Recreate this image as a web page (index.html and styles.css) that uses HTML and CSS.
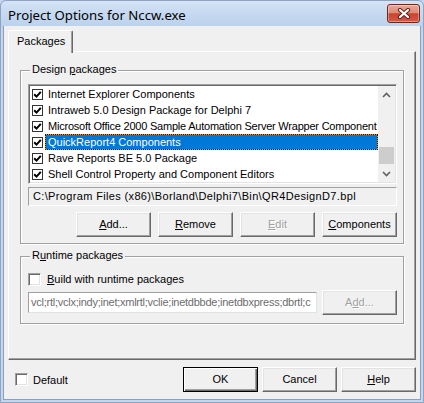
FILE: index.html
```html
<!DOCTYPE html>
<html>
<head>
<meta charset="utf-8">
<title>Project Options for Nccw.exe</title>
<link rel="stylesheet" href="styles.css">
</head>
<body>
<div class="window">
  <div class="titlebar">
    <span class="title">Project Options for Nccw.exe</span>
    <div class="close">
      <svg width="14" height="11" viewBox="0 0 14 11">
        <path d="M3 2 L11 9 M11 2 L3 9" stroke="#5b241a" stroke-width="4.2" stroke-linecap="round" fill="none"/>
        <path d="M3 2 L11 9 M11 2 L3 9" stroke="#ffffff" stroke-width="2.2" stroke-linecap="round" fill="none"/>
      </svg>
    </div>
  </div>
  <div class="client">
    <div class="tabs"><div class="tab">Packages</div></div>
    <div class="panel">
      <div class="group group-design">
        <div class="group-label">Design <u>p</u>ackages</div>
        <div class="listbox">
          <div class="list-items">
            <div class="item"><span class="cb"><svg width="9" height="9" viewBox="0 0 9 9"><path d="M1.2 4.2 L3.5 6.6 L7.8 1.8" stroke="#000" stroke-width="2" fill="none"/></svg></span><span class="item-text">Internet Explorer Components</span></div>
            <div class="item"><span class="cb"><svg width="9" height="9" viewBox="0 0 9 9"><path d="M1.2 4.2 L3.5 6.6 L7.8 1.8" stroke="#000" stroke-width="2" fill="none"/></svg></span><span class="item-text">Intraweb 5.0 Design Package for Delphi 7</span></div>
            <div class="item"><span class="cb"><svg width="9" height="9" viewBox="0 0 9 9"><path d="M1.2 4.2 L3.5 6.6 L7.8 1.8" stroke="#000" stroke-width="2" fill="none"/></svg></span><span class="item-text long">Microsoft Office 2000 Sample Automation Server Wrapper Component</span></div>
            <div class="item"><span class="cb"><svg width="9" height="9" viewBox="0 0 9 9"><path d="M1.2 4.2 L3.5 6.6 L7.8 1.8" stroke="#000" stroke-width="2" fill="none"/></svg></span><span class="item-text selected">QuickReport4 Components</span></div>
            <div class="item"><span class="cb"><svg width="9" height="9" viewBox="0 0 9 9"><path d="M1.2 4.2 L3.5 6.6 L7.8 1.8" stroke="#000" stroke-width="2" fill="none"/></svg></span><span class="item-text">Rave Reports BE 5.0 Package</span></div>
            <div class="item"><span class="cb"><svg width="9" height="9" viewBox="0 0 9 9"><path d="M1.2 4.2 L3.5 6.6 L7.8 1.8" stroke="#000" stroke-width="2" fill="none"/></svg></span><span class="item-text">Shell Control Property and Component Editors</span></div>
          </div>
          <div class="vscroll">
            <div class="sb-btn"><svg width="9" height="6" viewBox="0 0 9 6"><path d="M1 5 L4.5 1.5 L8 5" stroke="#606060" stroke-width="1.6" fill="none"/></svg></div>
            <div class="sb-track"><div class="sb-thumb"></div></div>
            <div class="sb-btn"><svg width="9" height="6" viewBox="0 0 9 6"><path d="M1 1 L4.5 4.5 L8 1" stroke="#606060" stroke-width="1.6" fill="none"/></svg></div>
          </div>
        </div>
        <div class="pathbox">C:\Program Files (x86)\Borland\Delphi7\Bin\QR4DesignD7.bpl</div>
        <div class="btn-row">
          <button class="btn"><u>A</u>dd...</button>
          <button class="btn"><u>R</u>emove</button>
          <button class="btn disabled"><u>E</u>dit</button>
          <button class="btn"><u>C</u>omponents</button>
        </div>
      </div>
      <div class="group group-runtime">
        <div class="group-label">R<u>u</u>ntime packages</div>
        <div class="check-row build"><span class="cb3d"></span><span><u>B</u>uild with runtime packages</span></div>
        <div class="edit-row">
          <div class="edit">vcl;rtl;vclx;indy;inet;xmlrtl;vclie;inetdbbde;inetdbxpress;dbrtl;c</div>
          <button class="btn disabled">A<u>d</u>d...</button>
        </div>
      </div>
    </div>
    <div class="footer">
      <div class="check-row default"><span class="cb3d"></span><span>Default</span></div>
      <div class="footer-btns">
        <button class="btn default-btn">OK</button>
        <button class="btn">Cancel</button>
        <button class="btn"><u>H</u>elp</button>
      </div>
    </div>
  </div>
</div>
</body>
</html>
```
FILE: styles.css
```css
* { box-sizing: border-box; }
html, body { margin: 0; padding: 0; }
body {
  width: 424px;
  height: 403px;
  overflow: hidden;
  font-family: "Liberation Sans", Arial, sans-serif;
  font-size: 11px;
  color: #000;
  background: #c3d6ee;
}
.window {
  width: 424px;
  height: 403px;
  display: flex;
  flex-direction: column;
  border: 1px solid #8ea4c0;
  border-radius: 6px 6px 0 0;
  background: linear-gradient(#d5e4f6 0, #c6d9f0 12px, #bcd2ed 25px, #c3d6ee 30px, #c3d6ee 100%);
}
.titlebar {
  height: 25px;
  flex: none;
  display: flex;
  align-items: flex-start;
  justify-content: space-between;
  padding: 0 3px 0 7px;
}
.title {
  font-family: "Noto Sans", "Liberation Sans", sans-serif;
  font-size: 13.2px;
  line-height: 16px;
  margin-top: 6px;
  color: #000;
}
.close {
  width: 33px;
  height: 19px;
  margin-top: 3px;
  border: 1px solid #6c2a1e;
  border-radius: 3px;
  background: linear-gradient(#eaa999 0%, #de8a76 45%, #c9432d 52%, #d25c45 100%);
  box-shadow: inset 0 0 0 1px rgba(255, 255, 255, 0.35);
  display: flex;
  align-items: center;
  justify-content: center;
}
.client {
  flex: 1;
  margin: 0 2px 2px 2px;
  background: #f0f0f0;
  border: 1px solid #8a9fbb;
  border-top: 0;
  padding: 4px 4px 0 4px;
  display: flex;
  flex-direction: column;
}
.tabs {
  height: 21px;
  flex: none;
  display: flex;
}
.tab {
  position: relative;
  z-index: 1;
  width: 65px;
  height: 23px;
  background: #f0f0f0;
  border-top: 1px solid #fff;
  border-left: 1px solid #fff;
  border-right: 1px solid #696969;
  border-radius: 2px 2px 0 0;
  box-shadow: inset -1px 0 #a0a0a0;
  padding: 3px 0 0 8px;
  line-height: 14px;
}
.panel {
  height: 309px;
  flex: none;
  border: 1px solid;
  border-color: #fff #696969 #696969 #fff;
  box-shadow: inset -1px -1px #a0a0a0;
  padding: 0 11px;
}
.group {
  border: 1px solid #a0a0a0;
  box-shadow: inset 1px 1px #fff, 1px 1px #fff;
  padding: 0 6px 6px 7px;
}
.group-design { margin-top: 18px; }
.group-runtime { margin-top: 12px; padding-bottom: 8px; }
.group-label {
  width: fit-content;
  margin: -8px 0 0 2px;
  padding: 0 2px;
  background: #f0f0f0;
  line-height: 13px;
  height: 13px;
}
.group-design .group-label { margin-bottom: 8px; }
.listbox {
  height: 100px;
  display: flex;
  border: 1px solid;
  border-color: #a0a0a0 #fff #fff #a0a0a0;
  box-shadow: inset 1px 1px #696969, inset -1px -1px #e3e3e3;
  padding: 1px;
}
.list-items {
  flex: 1;
  min-width: 0;
  background: #fff;
  overflow: hidden;
}
.item {
  height: 16px;
  display: flex;
  align-items: center;
}
.cb {
  flex: none;
  width: 11px;
  height: 11px;
  margin: 0 2px;
  border: 1px solid #333;
  background: #fff;
  display: flex;
  align-items: center;
  justify-content: center;
}
.item-text {
  flex: 1;
  min-width: 0;
  height: 16px;
  line-height: 16px;
  padding-left: 3px;
  white-space: nowrap;
  overflow: hidden;
}
.item-text.long { letter-spacing: -0.22px; }
.item-text.selected {
  color: #fff;
  border: 1px dotted #1a1a1a;
  line-height: 14px;
  padding-left: 2px;
  background: linear-gradient(#0078d7, #0078d7) padding-box, linear-gradient(#f39130, #f39130) border-box;
}
.vscroll {
  width: 17px;
  flex: none;
  background: #f0f0f0;
  display: flex;
  flex-direction: column;
}
.sb-btn {
  height: 17px;
  display: flex;
  align-items: center;
  justify-content: center;
}
.sb-track {
  flex: 1;
  padding: 44px 1px 0 1px;
}
.sb-thumb {
  height: 17px;
  background: #cdcdcd;
}
.pathbox {
  margin-top: 3px;
  height: 19px;
  border: 1px solid;
  border-color: #a0a0a0 #fff #fff #a0a0a0;
  padding-left: 4px;
  line-height: 17px;
  letter-spacing: 0.35px;
  white-space: nowrap;
  overflow: hidden;
}
.btn-row {
  margin-top: 6px;
  display: flex;
  justify-content: flex-end;
  gap: 7px;
}
.btn {
  width: 75px;
  height: 25px;
  flex: none;
  margin: 0;
  padding: 0;
  font: inherit;
  color: #000;
  background: #f0f0f0;
  border: 1px solid;
  border-color: #fff #696969 #696969 #fff;
  box-shadow: inset -1px -1px #a0a0a0, inset 1px 1px #e3e3e3;
  line-height: 23px;
  text-align: center;
}
.btn.disabled {
  color: #a0a0a0;
  text-shadow: 1px 1px #fff;
}
.btn.default-btn {
  border: 1px solid #000;
  box-shadow: inset 1px 1px #fff, inset -1px -1px #696969, inset -2px -2px #a0a0a0;
}
.check-row {
  display: flex;
  align-items: center;
  gap: 6px;
  height: 16px;
}
.check-row.build { margin-top: 9px; }
.check-row.default { gap: 5px; }
.cb3d {
  flex: none;
  width: 13px;
  height: 13px;
  background: #fff;
  border: 1px solid;
  border-color: #a0a0a0 #fff #fff #a0a0a0;
  box-shadow: inset 1px 1px #696969, inset -1px -1px #e3e3e3;
}
.edit-row {
  margin-top: 3px;
  display: flex;
  align-items: center;
  gap: 5px;
}
.edit {
  width: 289px;
  height: 21px;
  background: #fff;
  border: 1px solid;
  border-color: #a0a0a0 #e3e3e3 #e3e3e3 #a0a0a0;
  color: #6d6d6d;
  padding-left: 2px;
  line-height: 19px;
  letter-spacing: -0.25px;
  white-space: nowrap;
  overflow: hidden;
}
.footer {
  flex: 1;
  display: flex;
  align-items: center;
  padding-left: 7px;
}
.footer-btns {
  margin-left: auto;
  display: flex;
  gap: 4px;
}
```
